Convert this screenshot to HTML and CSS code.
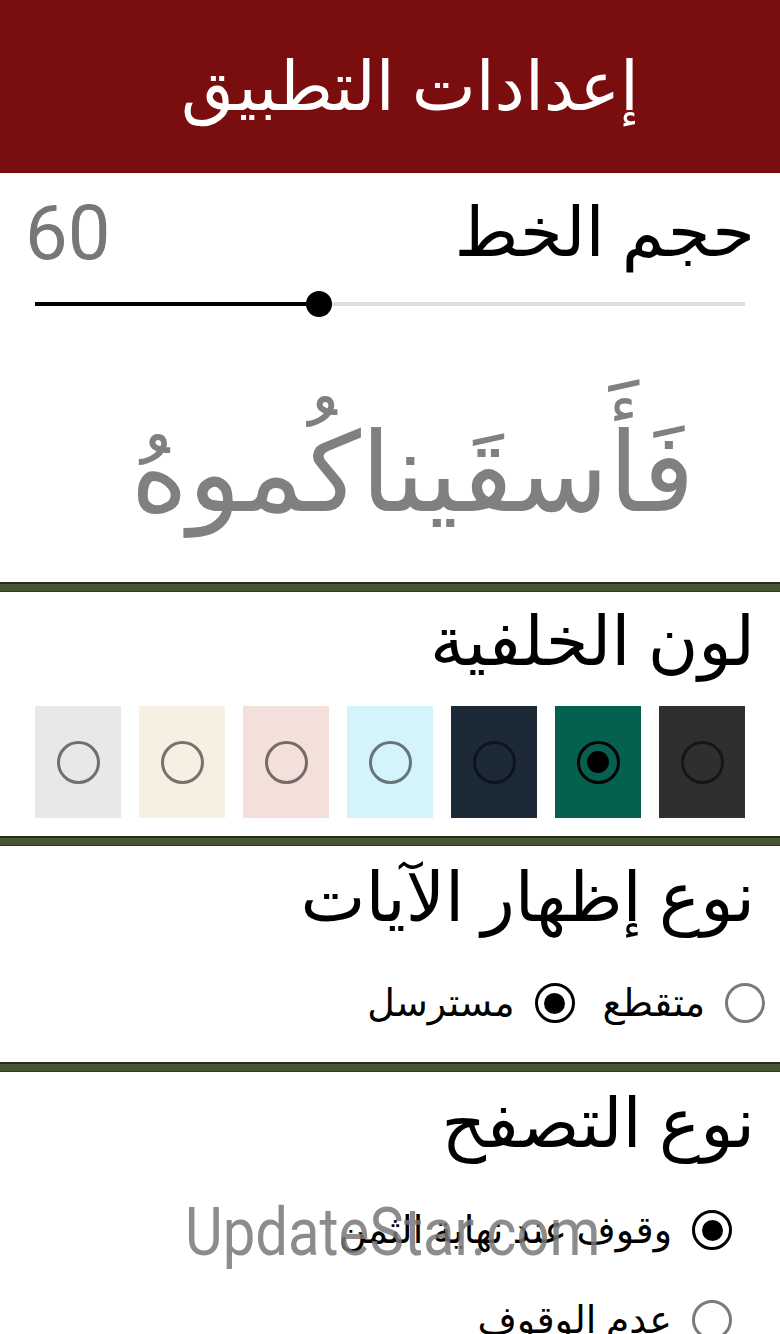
FILE: index.html
```html
<!DOCTYPE html>
<html lang="ar" dir="rtl">
<head>
  <meta charset="UTF-8">
  <meta name="viewport" content="width=device-width, initial-scale=1.0">
  <title>إعدادات التطبيق</title>
  <link rel="stylesheet" href="styles.css">
</head>
<body>
  <header class="app-bar">
    <h1>إعدادات التطبيق</h1>
  </header>

  <section class="section font-section">
    <div class="size-row">
      <h2 class="section-title">حجم الخط</h2>
      <span class="size-value">60</span>
    </div>
    <div class="slider">
      <div class="slider-fill" style="width: 40%"></div>
      <div class="slider-thumb" style="left: 40%"></div>
    </div>
    <p class="preview">فَأَسقَيناكُموهُ</p>
  </section>

  <div class="divider"></div>

  <section class="section color-section">
    <h2 class="section-title">لون الخلفية</h2>
    <div class="swatches">
      <div class="swatch" style="background: #2f2f2f"><span class="ring"></span></div>
      <div class="swatch" style="background: #04604f"><span class="ring checked"></span></div>
      <div class="swatch" style="background: #1c2a37"><span class="ring"></span></div>
      <div class="swatch" style="background: #d3f4fa"><span class="ring"></span></div>
      <div class="swatch" style="background: #f3e0da"><span class="ring"></span></div>
      <div class="swatch" style="background: #f5f0e2"><span class="ring"></span></div>
      <div class="swatch" style="background: #e8e8e8"><span class="ring"></span></div>
    </div>
  </section>

  <div class="divider"></div>

  <section class="section display-section">
    <h2 class="section-title">نوع إظهار الآيات</h2>
    <div class="radio-row">
      <label class="radio"><span class="radio-btn"></span>متقطع</label>
      <label class="radio"><span class="radio-btn checked"></span>مسترسل</label>
    </div>
  </section>

  <div class="divider"></div>

  <section class="section browse-section">
    <h2 class="section-title">نوع التصفح</h2>
    <div class="radio-list">
      <label class="radio"><span class="radio-btn checked"></span>وقوف عند نهاية الثمن</label>
      <label class="radio"><span class="radio-btn"></span>عدم الوقوف</label>
    </div>
  </section>

  <div class="watermark">UpdateStar.com</div>
</body>
</html>
```

FILE: styles.css
```css
* {
  margin: 0;
  padding: 0;
  box-sizing: border-box;
}
html, body {
  width: 780px;
  height: 1334px;
  overflow: hidden;
}
body {
  background: #fff;
  color: #000;
  font-family: "Liberation Serif", "DejaVu Sans", serif;
  position: relative;
}
.app-bar {
  height: 173px;
  background: #7a0e0f;
  display: flex;
  align-items: center;
  justify-content: center;
  padding-left: 40px;
}
.app-bar h1 {
  color: #fff;
  font-size: 68px;
  font-weight: normal;
  line-height: 1;
}
.section {
  padding: 0 25px;
}
.section-title {
  font-size: 69px;
  font-weight: normal;
  line-height: 1;
}
.font-section {
  height: 409px;
  padding-top: 20px;
}
.size-row {
  display: flex;
  justify-content: space-between;
  align-items: center;
  height: 80px;
}
.size-value {
  font-family: Roboto, sans-serif;
  font-size: 76px;
  color: #777;
  line-height: 1;
}
.slider {
  direction: ltr;
  position: relative;
  height: 4px;
  margin: 29px 10px 0;
  background: #dedede;
}
.slider-fill {
  height: 100%;
  background: #000;
}
.slider-thumb {
  position: absolute;
  top: 50%;
  width: 26px;
  height: 26px;
  margin: -13px 0 0 -13px;
  border-radius: 50%;
  background: #000;
}
.preview {
  text-align: center;
  font-family: "DejaVu Sans", sans-serif;
  font-size: 110px;
  color: #808080;
  line-height: 1;
  padding-top: 112px;
  padding-left: 45px;
}
.divider {
  height: 10px;
  background: #475535;
  border-top: 2px solid #252d1c;
  border-bottom: 1px solid #2e3824;
}
.color-section {
  height: 244px;
  padding-top: 16px;
}
.swatches {
  display: flex;
  gap: 18px;
  margin: 29px 10px 0;
}
.swatch {
  width: 86px;
  height: 112px;
  display: flex;
  align-items: center;
  justify-content: center;
}
.ring {
  width: 43px;
  height: 43px;
  border-radius: 50%;
  border: 3.5px solid rgba(0, 0, 0, 0.52);
  display: flex;
  align-items: center;
  justify-content: center;
}
.ring.checked {
  border-color: #000;
}
.ring.checked::after {
  content: "";
  width: 22px;
  height: 22px;
  border-radius: 50%;
  background: #000;
}
.display-section {
  height: 216px;
  padding-top: 18px;
}
.radio-row {
  display: flex;
  gap: 28px;
  margin-top: 50px;
  margin-right: -10px;
}
.radio {
  display: flex;
  align-items: center;
  gap: 20px;
  font-size: 38px;
  line-height: 1;
}
.radio-btn {
  width: 40px;
  height: 40px;
  border-radius: 50%;
  border: 3.5px solid #7a7a7a;
  display: flex;
  align-items: center;
  justify-content: center;
  flex-shrink: 0;
}
.radio-btn.checked {
  border-color: #000;
}
.radio-btn.checked::after {
  content: "";
  width: 21px;
  height: 21px;
  border-radius: 50%;
  background: #000;
}
.browse-section {
  padding-top: 18px;
}
.radio-list {
  display: flex;
  flex-direction: column;
  gap: 50px;
  margin-top: 51px;
  padding-right: 23px;
}
.watermark {
  position: absolute;
  left: 185px;
  top: 1200px;
  direction: ltr;
  font-family: Roboto, sans-serif;
  font-weight: 400;
  font-size: 66px;
  color: rgba(120, 120, 120, 0.85);
  line-height: 1;
  transform: scaleX(0.88);
  transform-origin: left top;
}
```
